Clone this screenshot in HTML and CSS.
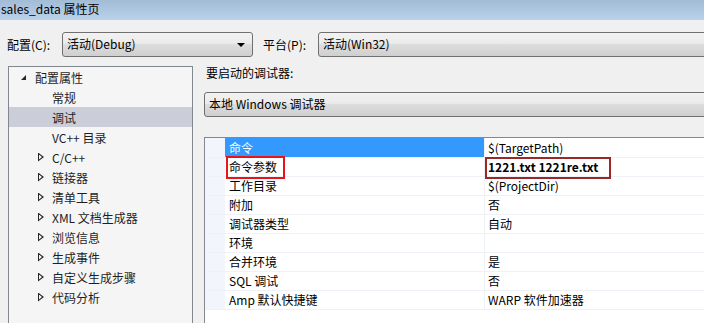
FILE: index.html
```html
<!DOCTYPE html>
<html lang="zh">
<head>
    <meta charset="UTF-8">
    <title>sales_data 属性页</title>
<link rel="stylesheet" href="styles.css">
</head>
<body>
    <header class="titel">sales_data 属性页</header>

    <div class="config">
        <label class="lbl">配置(C):</label>
        <div class="combo combo-cfg">活动(Debug)<span class="pil"></span></div>
        <label class="lbl lbl-plat">平台(P):</label>
        <div class="combo combo-plat">活动(Win32)</div>
    </div>

    <main>
        <nav class="tree">
            <div class="item top"><span class="open"></span>配置属性</div>
            <div class="item sub">常规</div>
            <div class="item sub valgt">调试</div>
            <div class="item sub">VC++ 目录</div>
            <div class="item sub"><span class="luk"></span>C/C++</div>
            <div class="item sub"><span class="luk"></span>链接器</div>
            <div class="item sub"><span class="luk"></span>清单工具</div>
            <div class="item sub"><span class="luk"></span>XML 文档生成器</div>
            <div class="item sub"><span class="luk"></span>浏览信息</div>
            <div class="item sub"><span class="luk"></span>生成事件</div>
            <div class="item sub"><span class="luk"></span>自定义生成步骤</div>
            <div class="item sub"><span class="luk"></span>代码分析</div>
        </nav>

        <section class="side">
            <p class="overskrift">要启动的调试器:</p>
            <div class="combo combo-dbg">本地 Windows 调试器</div>

            <div class="grid">
                <div class="row forste valgt"><span class="gut"></span><span class="navn">命令</span><span class="vaerdi">$(TargetPath)</span></div>
                <div class="row"><span class="gut"></span><span class="navn">命令参数<i class="mark mark-navn"></i></span><span class="vaerdi fed">1221.txt 1221re.txt<i class="mark mark-vaerdi"></i></span></div>
                <div class="row"><span class="gut"></span><span class="navn">工作目录</span><span class="vaerdi">$(ProjectDir)</span></div>
                <div class="row"><span class="gut"></span><span class="navn">附加</span><span class="vaerdi">否</span></div>
                <div class="row"><span class="gut"></span><span class="navn">调试器类型</span><span class="vaerdi">自动</span></div>
                <div class="row"><span class="gut"></span><span class="navn">环境</span><span class="vaerdi"></span></div>
                <div class="row"><span class="gut"></span><span class="navn">合并环境</span><span class="vaerdi">是</span></div>
                <div class="row"><span class="gut"></span><span class="navn">SQL 调试</span><span class="vaerdi">否</span></div>
                <div class="row"><span class="gut"></span><span class="navn">Amp 默认快捷键</span><span class="vaerdi">WARP 软件加速器</span></div>
            </div>
        </section>
    </main>
</body>
</html>
```

FILE: styles.css
```css
body {
    margin: 0;
    width: 704px;
    height: 323px;
    overflow: hidden;
    background-color: #f0f0f0;
    font-family: "Noto Sans CJK SC", "Noto Sans", sans-serif;
    font-size: 12px;
    color: #000;
}

.titel {
    height: 20px;
    line-height: 18px;
    padding-left: 1px;
    background: linear-gradient(#a3bcd6, #b9d1ea);
    color: #000;
}

/* config row */

.config {
    display: flex;
    align-items: center;
    margin-top: 12px;
    height: 25px;
}

.lbl {
    padding-left: 7px;
    width: 48px;
    margin-right: 7px;
}

.lbl-plat {
    padding-left: 10px;
    width: 48px;
}

.combo {
    position: relative;
    box-sizing: border-box;
    height: 25px;
    line-height: 22px;
    padding-left: 4px;
    border: 1px solid #707070;
    border-radius: 3px;
    background: linear-gradient(#f2f2f2 0%, #ebebeb 45%, #dddddd 50%, #cfcfcf 100%);
}

.combo-cfg {
    width: 191px;
}

.combo-plat {
    flex: 1;
    margin-right: -10px;
}

.pil {
    position: absolute;
    right: 7px;
    top: 10px;
    border-left: 4px solid transparent;
    border-right: 4px solid transparent;
    border-top: 4px solid #000;
}

/* main area */

main {
    display: flex;
    margin-top: 9px;
}

.tree {
    width: 183px;
    height: 260px;
    margin-left: 8px;
    border: 1px solid #828790;
    border-bottom: none;
    background-color: #f5f5f5;
}

.item {
    display: flex;
    align-items: center;
    height: 20px;
    color: #1e1e1e;
}

.top {
    padding-left: 12px;
}

.sub {
    padding-left: 43px;
}

.item.valgt {
    background-color: #cbcdd9;
}

.open {
    width: 0;
    height: 0;
    margin-right: 9px;
    border-left: 5px solid transparent;
    border-bottom: 5px solid #262626;
}

.luk {
    box-sizing: border-box;
    width: 6px;
    height: 9px;
    margin-left: -14px;
    margin-right: 8px;
    background: #262626;
    clip-path: polygon(0 0, 100% 50%, 0 100%);
    position: relative;
}

.luk::after {
    content: "";
    position: absolute;
    left: 1px;
    top: 2px;
    width: 3px;
    height: 5px;
    background: #f5f5f5;
    clip-path: polygon(0 0, 100% 50%, 0 100%);
}

.side {
    flex: 1;
    margin-left: 11px;
}

.overskrift {
    margin: 0 0 0 2px;
    height: 26px;
    line-height: 14px;
}

.combo-dbg {
    margin-right: -10px;
}

/* property grid */

.grid {
    margin-top: 20px;
    margin-right: -10px;
    height: 200px;
    border-top: 1px solid #828790;
    border-left: 1px solid #828790;
    background-color: #fff;
}

.row {
    display: flex;
    height: 18px;
    line-height: 18px;
    border-bottom: 1px solid #eef1f6;
}

.row.forste {
    height: 19px;
    line-height: 19px;
}

.gut {
    width: 20px;
    background-color: #f2f5fb;
}

.navn {
    position: relative;
    box-sizing: border-box;
    width: 260px;
    padding-left: 4px;
    border-right: 1px solid #eef1f6;
}

.vaerdi {
    position: relative;
    flex: 1;
    padding-left: 3px;
}

.row.valgt .navn {
    background-color: #3399ff;
    color: #fff;
}

.fed {
    font-weight: bold;
}

.mark {
    position: absolute;
    box-sizing: border-box;
}

.mark-navn {
    top: -2px;
    left: 1px;
    width: 59px;
    height: 23px;
    border: 2px solid #e8141b;
}

.mark-vaerdi {
    top: -1px;
    left: 0;
    width: 126px;
    height: 22px;
    border: 2px solid #9b2828;
}
```
